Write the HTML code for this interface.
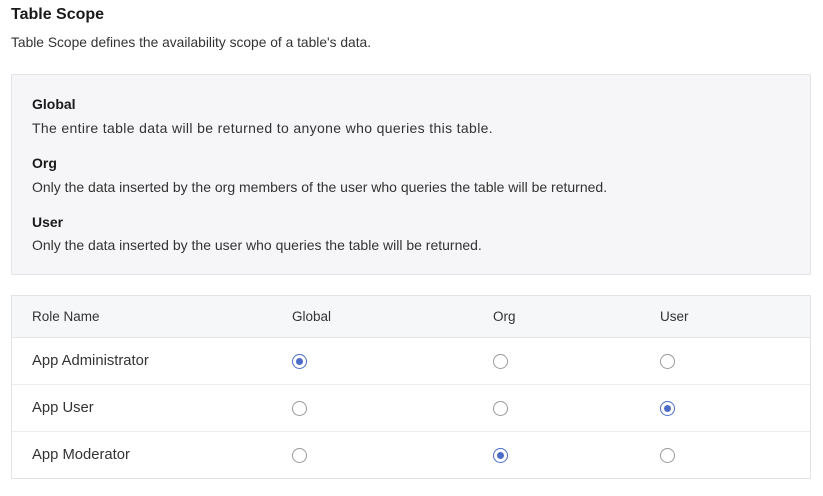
<!DOCTYPE html>
<html><head><meta charset="utf-8"><style>
*{margin:0;padding:0;box-sizing:border-box}
body{width:823px;height:496px;background:#fff;font-family:"Liberation Sans",sans-serif;color:#222;position:relative;overflow:hidden}
.a{position:absolute;white-space:nowrap}
h1{position:absolute;left:11px;top:6px;font-size:16px;font-weight:bold;color:#1a1a1a}
.sub{left:11px;top:35px;font-size:13.8px;color:#333}
.box{position:absolute;left:11px;top:74px;width:800px;height:201px;background:#f6f6f8;border:1px solid #e3e3e7;border-radius:2px}
.h{font-size:14px;font-weight:bold;color:#1a1a1a;left:32px}
.d{font-size:14px;color:#333;left:32px}
.tbl{position:absolute;left:11px;top:295px;width:800px;height:184px;border:1px solid #e3e3e7}
.hdr{position:absolute;left:0;top:0;width:798px;height:42px;background:#f6f7f9;border-bottom:1px solid #e6e6ea}
.row{position:absolute;left:0;width:798px;height:47px;border-bottom:1px solid #ececef}
.th{font-size:13.5px;color:#333;top:13px}
.td{font-size:14.8px;color:#333;top:15px;left:20px}
.r{position:absolute;width:15px;height:15px;border:1px solid #9a9a9a;border-radius:50%;top:16px;background:#fff}
.r.on{border-color:#4c6cc8}
.r.on::after{content:"";position:absolute;left:3px;top:3px;width:7px;height:7px;border-radius:50%;background:#4c6cc8}
</style></head><body>
<h1>Table Scope</h1>
<div class="a sub">Table Scope defines the availability scope of a table's data.</div>
<div class="box"></div>
<div class="a h" style="top:96px">Global</div>
<div class="a d" style="top:120px;letter-spacing:0.35px">The entire table data will be returned to anyone who queries this table.</div>
<div class="a h" style="top:155px">Org</div>
<div class="a d" style="top:179px">Only the data inserted by the org members of the user who queries the table will be returned.</div>
<div class="a h" style="top:214px">User</div>
<div class="a d" style="top:237px">Only the data inserted by the user who queries the table will be returned.</div>
<div class="tbl">
<div class="hdr">
<div class="a th" style="left:20px">Role Name</div>
<div class="a th" style="left:280px">Global</div>
<div class="a th" style="left:481px">Org</div>
<div class="a th" style="left:648px">User</div>
</div>
<div class="row" style="top:42px"><div class="a td">App Administrator</div><div class="r on" style="left:280px"></div><div class="r" style="left:481px"></div><div class="r" style="left:648px"></div></div>
<div class="row" style="top:89px"><div class="a td">App User</div><div class="r" style="left:280px"></div><div class="r" style="left:481px"></div><div class="r on" style="left:648px"></div></div>
<div class="row" style="top:136px;border-bottom:none"><div class="a td">App Moderator</div><div class="r" style="left:280px"></div><div class="r on" style="left:481px"></div><div class="r" style="left:648px"></div></div>
</div>
</body></html>
